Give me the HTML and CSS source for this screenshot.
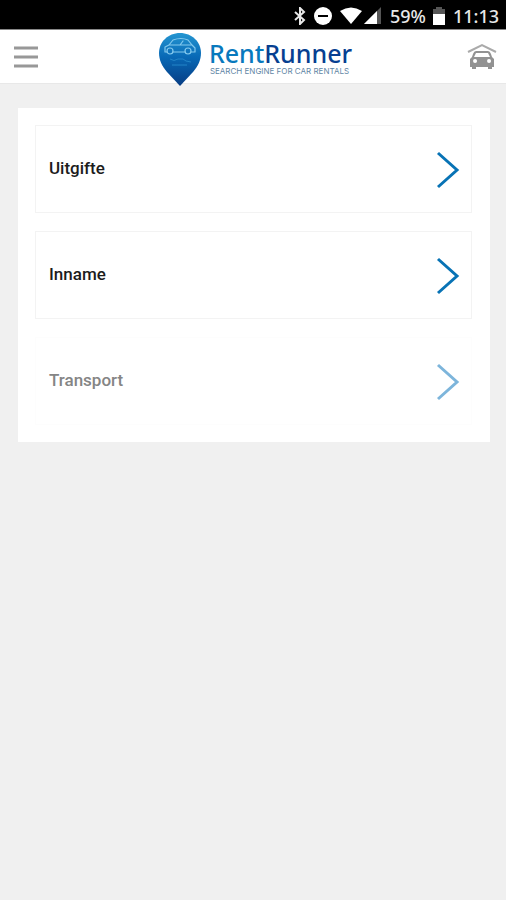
FILE: index.html
```html
<!DOCTYPE html>
<html lang="nl">
<head>
<meta charset="utf-8">
<meta name="viewport" content="width=device-width, initial-scale=1">
<title>RentRunner</title>
<link rel="stylesheet" href="styles.css">
</head>
<body>
<div class="status">
  <svg width="12" height="18" viewBox="0 0 12 18" fill="none" stroke="#e8e8e8" stroke-width="2"><path d="M1 5l9 8-4 4V1l4 4-9 8"/></svg>
  <svg class="dnd" width="18" height="18" viewBox="0 0 18 18"><circle cx="9" cy="9" r="9" fill="#fff"/><path d="M4 9h10" stroke="#000" stroke-width="2"/></svg>
  <svg class="wifi" width="22" height="17" viewBox="0 0 22 17"><path d="M0 4Q11-3 22 4L11 17Z" fill="#fff"/></svg>
  <svg class="signal" width="17" height="17" viewBox="0 0 17 17"><path d="M17 0v17H0Z" fill="#555"/><path d="M13 4v13H0Z" fill="#fff"/></svg>
  <span class="percent">59%</span>
  <svg class="battery" width="12" height="18" viewBox="0 0 12 18"><path d="M3 0h6v2h3v6H0V2h3Z" fill="#555"/><path d="M0 7h12v11H0Z" fill="#fff"/></svg>
  <span class="time">11:13</span>
</div>
<header class="header">
  <button class="icon-button menu" aria-label="Menu">
    <svg width="24" height="22" viewBox="0 0 24 22" stroke="#989898" stroke-width="3"><path d="M0 2h24M0 11h24M0 20h24"/></svg>
  </button>
  <a class="logo" href="#">
    <svg class="pin" width="42" height="54" viewBox="0 0 42 54">
      <defs><linearGradient id="pin-fill" x1="0" y1="0" x2="0" y2="1"><stop offset="0" stop-color="#2596d1"/><stop offset=".45" stop-color="#0869b6"/><stop offset="1" stop-color="#073c83"/></linearGradient></defs>
      <path d="M21 0C9 0 0 9 0 20c0 7 3 13 8 19l13 14 13-14c5-6 8-12 8-19C42 9 33 0 21 0Z" fill="url(#pin-fill)"/>
      <g fill="none" stroke="#83c9ee" stroke-width="1.2" stroke-linecap="round" stroke-linejoin="round">
        <path d="M8 19H6v-5l4-2 4-5q8-3 15 0l4 5 3 3v4h-4M14 19h12M10 12h11l3-4M21 12h11"/>
        <circle cx="11" cy="18" r="3"/><circle cx="29" cy="18" r="3"/>
      </g>
      <path d="M11 26q4 3 8 0h5l3 2 5 1M13 32h15" fill="none" stroke="#2385c8" stroke-width="1"/>
    </svg>
    <span class="words">
      <span class="name"><span class="rent">Rent</span><span class="runner">Runner</span></span>
      <span class="tagline">SEARCH ENGINE FOR CAR RENTALS</span>
    </span>
  </a>
  <button class="icon-button garage" aria-label="Garage">
    <svg width="30" height="28" viewBox="0 0 30 28">
      <path d="M1 9L15 2l14 7" fill="none" stroke="#aaa" stroke-width="2"/>
      <path fill-rule="evenodd" fill="#929292" d="M9 8h12q2 0 3 3l1 3 2 2v8h-2v2h-4v-2H9v2H5v-2H3v-8l2-2 1-3q1-3 3-3Zm0 2l-2 4h16l-2-4ZM8 16a2 2 0 1 0 .1 4A2 2 0 0 0 8 16Zm14 0a2 2 0 1 0 .1 4A2 2 0 0 0 22 16Z"/>
    </svg>
  </button>
</header>
<main class="panel">
  <button class="card"><span class="label">Uitgifte</span>
    <svg class="chevron" width="24" height="38" viewBox="0 0 24 38"><path d="M2 2l19 17L2 36"/></svg>
  </button>
  <button class="card"><span class="label">Inname</span>
    <svg class="chevron" width="24" height="38" viewBox="0 0 24 38"><path d="M2 2l19 17L2 36"/></svg>
  </button>
  <button class="card" disabled><span class="label">Transport</span>
    <svg class="chevron" width="24" height="38" viewBox="0 0 24 38"><path d="M2 2l19 17L2 36"/></svg>
  </button>
</main>
</body>
</html>
```
FILE: styles.css
```css
* {
  box-sizing: border-box;
}

body {
  margin: 0;
  min-height: 100vh;
  background: #f0f0f0;
  font-family: Roboto, "Liberation Sans", sans-serif;
}

svg {
  display: block;
  flex: none;
}

.status {
  display: flex;
  align-items: center;
  justify-content: flex-end;
  height: 30px;
  padding: 2px 7px 0 0;
  border-bottom: 1px solid #888;
  background: #000;
  color: #e8e8e8;
  font: 500 18px/24px "Noto Sans", sans-serif;
}

.dnd,
.wifi {
  margin-left: 8px;
}

.percent {
  margin-left: 9px;
}

.signal {
  margin-left: 2px;
}

.battery {
  margin-left: 7px;
}

.time {
  margin-left: 8px;
}

.header {
  display: grid;
  grid-template-columns: 1fr auto 1fr;
  align-items: center;
  height: 54px;
  padding: 0 9px 0 14px;
  border-bottom: 1px solid #e8e8e8;
  background: #fff;
}

.icon-button {
  padding: 0;
  border: 0;
  background: none;
}

.garage {
  justify-self: end;
}

.menu {
  justify-self: start;
}

.logo {
  display: flex;
  align-items: flex-start;
  gap: 8px;
  height: 48px;
  color: inherit;
  text-decoration: none;
}

.words {
  display: flex;
  flex-direction: column;
  padding-top: 6px;
}

.name {
  font: 500 25px/28px "Noto Sans", sans-serif;
}

.rent {
  color: #0879bd;
}

.runner {
  color: #073f91;
}

.tagline {
  padding-left: 1px;
  color: #5f86a5;
  font: 8px/8px Inter, sans-serif;
}

.panel {
  display: grid;
  gap: 18px;
  margin: 24px 16px 0 18px;
  padding: 17px 18px 17px 17px;
  background: #fff;
}

.card {
  display: flex;
  align-items: center;
  justify-content: space-between;
  height: 88px;
  padding: 2px 11px 0 13px;
  border: 1px solid #f3f3f3;
  background: #fff;
  color: #1c1c1c;
  font: 500 17px/24px Roboto, sans-serif;
  text-align: left;
}

.label {
  padding-bottom: 4px;
}

.chevron {
  fill: none;
  stroke: #0873b5;
  stroke-width: 3;
}

.card:disabled {
  border-color: #fdfdfd;
  color: #858585;
}

.card:disabled .chevron {
  stroke: #7db5db;
}
```
